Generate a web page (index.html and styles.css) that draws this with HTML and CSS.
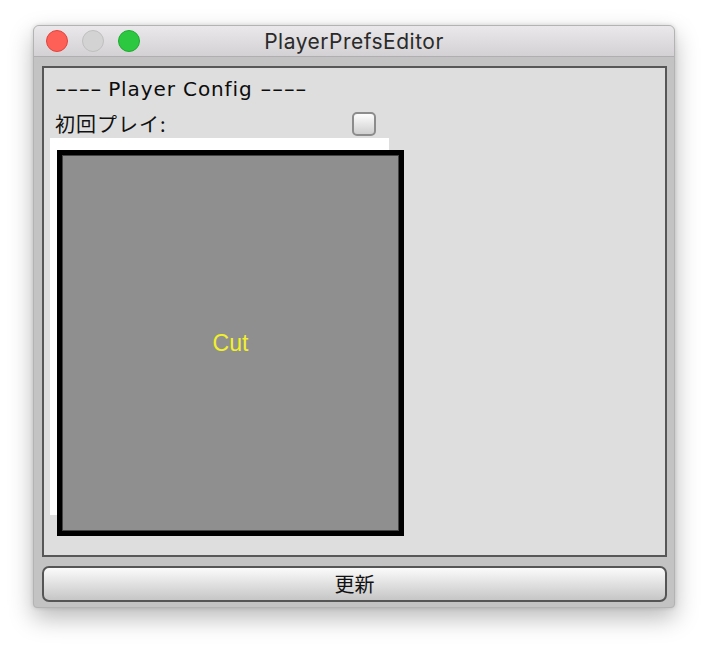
FILE: index.html
```html
<!DOCTYPE html>
<html lang="ja">
<head>
<meta charset="utf-8">
<title>PlayerPrefsEditor</title>
<link rel="stylesheet" href="styles.css">
</head>
<body>
<div class="window">
  <div class="titlebar">
    <div class="lights">
      <span class="light red"></span>
      <span class="light gray"></span>
      <span class="light green"></span>
    </div>
    <div class="title">PlayerPrefsEditor</div>
  </div>
  <div class="content">
    <div class="panel">
      <div class="heading"><span class="dash">----</span> Player Config <span class="dash last">----</span></div>
      <div class="row">
        <span class="label">初回プレイ:</span>
        <span class="checkbox"></span>
      </div>
      <div class="stack">
        <div class="sheet"></div>
        <div class="cut-box"><span class="cut">Cut</span></div>
      </div>
    </div>
    <button class="update">更新</button>
  </div>
</div>
</body>
</html>
```

FILE: styles.css
```css
html, body {
  margin: 0;
  padding: 0;
  background: #ffffff;
}

body {
  padding: 25px 0 0 33px;
  height: 650px;
  box-sizing: border-box;
  font-family: "DejaVu Sans", "Noto Sans CJK JP", sans-serif;
}

.window {
  width: 642px;
  height: 583px;
  box-sizing: border-box;
  border: 1px solid #b3b3b3;
  border-radius: 6px 6px 4px 4px;
  background: #c3c3c3;
  box-shadow: 0 10px 24px rgba(0, 0, 0, 0.28), 0 0 4px rgba(0, 0, 0, 0.14);
  display: flex;
  flex-direction: column;
  overflow: hidden;
}

.titlebar {
  position: relative;
  height: 30px;
  border-bottom: 1px solid #b0aeb0;
  background: linear-gradient(#eae8ea, #d3d1d3);
  display: flex;
  align-items: center;
  justify-content: center;
  flex: none;
}

.lights {
  position: absolute;
  left: 12px;
  top: 4px;
  display: flex;
  gap: 14px;
}

.light {
  width: 22px;
  height: 22px;
  border-radius: 50%;
  box-sizing: border-box;
}

.red {
  background: #fe5f57;
  border: 1px solid #e0443e;
}

.gray {
  background: #d3d3d3;
  border: 1px solid #bfbfbf;
}

.green {
  background: #2bc840;
  border: 1px solid #1eaa30;
}

.title {
  font-family: "Inter", "DejaVu Sans", sans-serif;
  font-size: 21px;
  letter-spacing: 0.5px;
  color: #2a2a2a;
  line-height: 30px;
  padding-top: 1px;
}

.content {
  flex: 1;
  padding: 9px 7px 5px 8px;
  display: flex;
  flex-direction: column;
  gap: 9px;
}

.panel {
  width: 625px;
  height: 491px;
  box-sizing: border-box;
  border: 2px solid #575757;
  background: #dedede;
  padding: 9px 0 0 6px;
  display: flex;
  flex-direction: column;
}

.heading {
  font-size: 20px;
  line-height: 24px;
  color: #0c0c0c;
  padding-left: 5px;
  letter-spacing: 0.9px;
}

.dash {
  display: inline-block;
  letter-spacing: 0;
  transform: scaleX(1.62);
  transform-origin: left center;
  margin-right: 17px;
}

.dash.last {
  margin-right: 0;
}

.row {
  margin-top: 10px;
  height: 26px;
  display: flex;
  align-items: center;
  padding-left: 5px;
}

.label {
  font-family: "Noto Sans CJK JP", sans-serif;
  font-size: 20px;
  line-height: 26px;
  letter-spacing: 1px;
  color: #111;
  width: 297px;
}

.checkbox {
  width: 24px;
  height: 24px;
  box-sizing: border-box;
  border: 2px solid #8c8c8c;
  border-radius: 5px;
  background: linear-gradient(#fdfdfd, #cfcfcf);
}

.stack {
  margin-top: 1px;
  display: grid;
  justify-items: start;
  align-items: start;
}

.sheet,
.cut-box {
  grid-area: 1 / 1;
}

.sheet {
  width: 339px;
  height: 377px;
  background: #ffffff;
}

.cut-box {
  margin: 12px 0 0 7px;
  width: 347px;
  height: 386px;
  box-sizing: border-box;
  border: 5px solid #000;
  background: #8f8f8f;
  box-shadow: inset 0 0 0 1px #444;
  display: flex;
  align-items: center;
  justify-content: center;
}

.cut {
  font-family: "Liberation Sans", Arial, sans-serif;
  font-size: 23px;
  color: #f2f02a;
}

.update {
  width: 625px;
  height: 36px;
  box-sizing: border-box;
  border: 2px solid #555;
  border-radius: 7px;
  background: linear-gradient(#fbfbfb, #c6c6c6);
  font-family: "Noto Sans CJK JP", sans-serif;
  font-size: 20px;
  color: #111;
  padding: 0;
  line-height: 30px;
}
```
